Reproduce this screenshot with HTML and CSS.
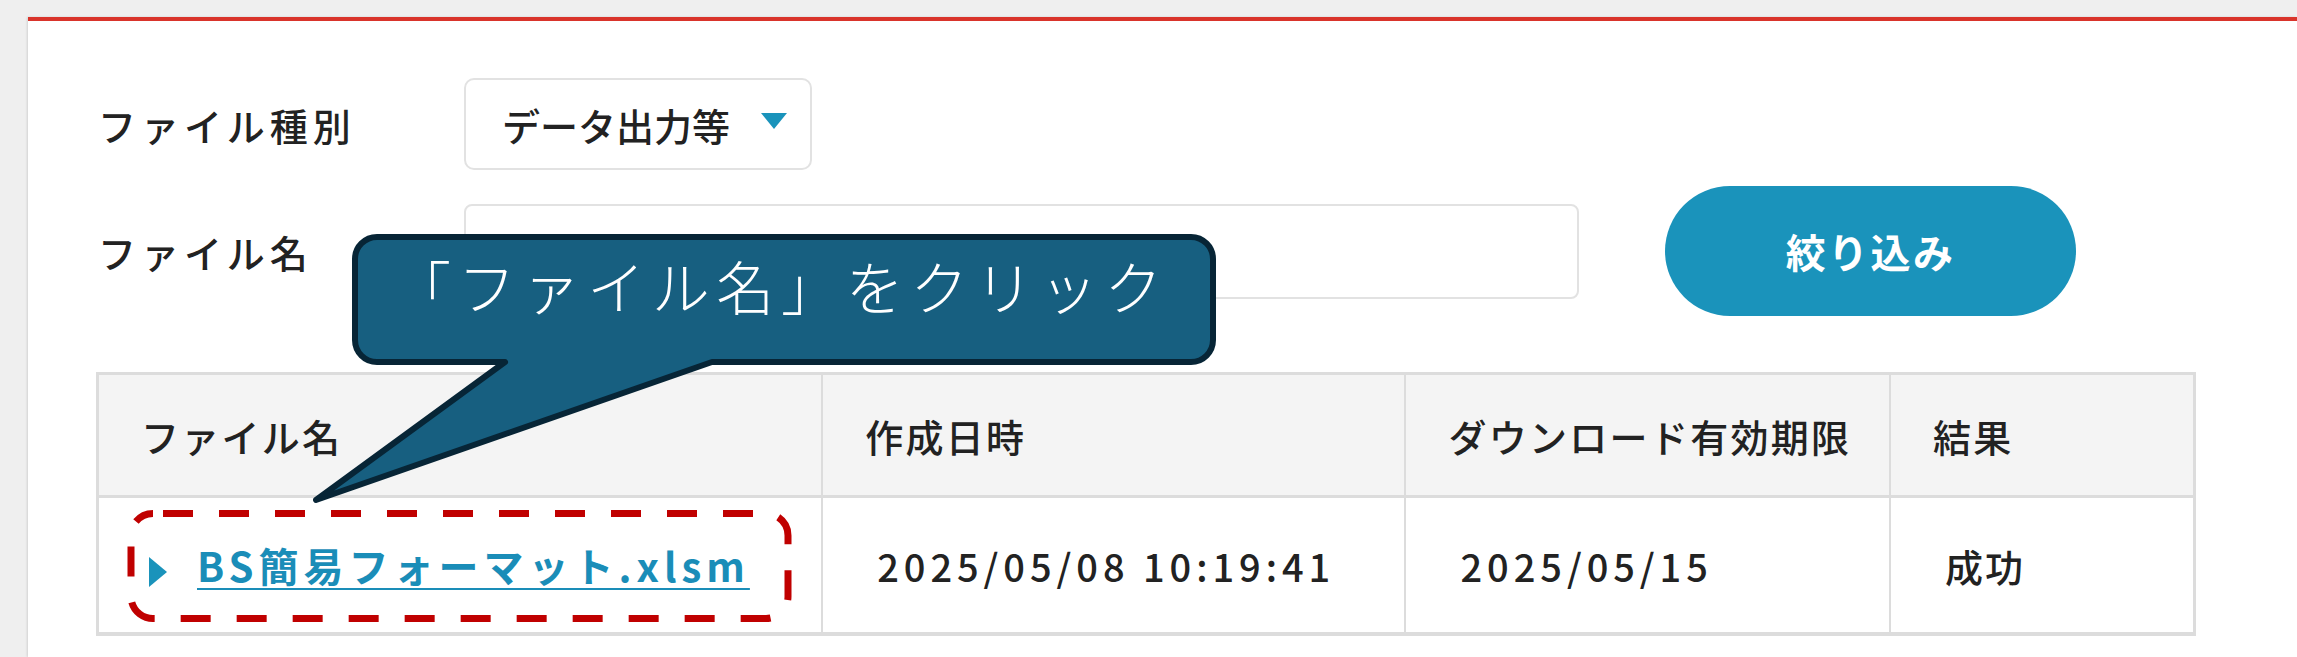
FILE: index.html
```html
<!DOCTYPE html>
<html lang="ja">
<head>
	<meta charset="UTF-8">
	<title>ファイル一覧</title>
	<link rel="stylesheet" href="styles.css">
</head>
<body>
	<div class="panel">
		<!-- Filter form -->
		<div class="filter">
			<div class="filter-row">
				<span class="filter-label">ファイル種別</span>
				<div class="select">
					<span>データ出力等</span>
					<span class="caret"></span>
				</div>
			</div>
			<div class="filter-row">
				<span class="filter-label">ファイル名</span>
				<div class="text-input"></div>
				<button class="btn-filter">絞り込み</button>
			</div>
		</div>

		<!-- Result table -->
		<table class="files">
			<colgroup>
				<col class="col-name">
				<col class="col-date">
				<col class="col-limit">
				<col class="col-result">
			</colgroup>
			<thead>
				<tr>
					<th>ファイル名</th>
					<th>作成日時</th>
					<th>ダウンロード有効期限</th>
					<th>結果</th>
				</tr>
			</thead>
			<tbody>
				<tr>
					<td><span class="file-arrow"></span><a class="file-link" href="#">BS簡易フォーマット.xlsm</a></td>
					<td class="num">2025/05/08 10:19:41</td>
					<td class="num">2025/05/15</td>
					<td>成功</td>
				</tr>
			</tbody>
		</table>

		<!-- Annotation overlays -->
		<svg class="mark-box" viewBox="120 500 680 130" width="680" height="130">
			<rect x="131" y="513.5" width="657" height="105" rx="22" ry="22" fill="none" stroke="#c00000" stroke-width="7" stroke-dasharray="30 26" stroke-dashoffset="-10"/>
		</svg>
		<div class="callout">
			<svg class="callout-shape" viewBox="300 225 925 290" width="925" height="290">
				<path d="M377 237 H1191 A22 22 0 0 1 1213 259 V340 A22 22 0 0 1 1191 362 H712 L316 500 L505 362 H377 A22 22 0 0 1 355 340 V259 A22 22 0 0 1 377 237 Z" fill="#175f80" stroke="#072536" stroke-width="6" stroke-linejoin="round"/>
			</svg>
			<span class="callout-text">「ファイル名」をクリック</span>
		</div>
	</div>
</body>
</html>
```

FILE: styles.css
```css
body {
	margin: 0;
	padding: 0;
	overflow: hidden;
	background-color: #efefef;
	font-family: "Noto Sans CJK JP", "Noto Sans", sans-serif;
	color: #222;
}

/* White panel with red top rule */
.panel {
	position: relative;
	box-sizing: border-box;
	min-height: calc(100vh - 17px);
	margin: 17px 0 0 28px;
	padding: 57px 0 0 68px;
	background: #fff;
	border-top: 4px solid #d9342b;
	box-shadow: -1px 0 2px rgba(0, 0, 0, 0.12);
}

/* Filter form */
.filter-row {
	display: flex;
	align-items: center;
}

.filter-row + .filter-row {
	margin-top: 16px;
}

.filter-label {
	box-sizing: border-box;
	width: 368px;
	padding-left: 2px;
	font-size: 38px;
	font-weight: 500;
	letter-spacing: 0.13em;
}

.select {
	box-sizing: border-box;
	display: flex;
	align-items: center;
	justify-content: space-between;
	width: 348px;
	height: 92px;
	padding: 0 23px 0 36px;
	border: 2px solid #e2e2e2;
	border-radius: 10px;
	font-size: 38px;
	font-weight: 500;
}

.caret {
	width: 0;
	height: 0;
	margin-bottom: 6px;
	border-left: 13px solid transparent;
	border-right: 13px solid transparent;
	border-top: 16px solid #1a93bb;
}

.text-input {
	box-sizing: border-box;
	width: 1115px;
	height: 95px;
	border: 2px solid #e2e2e2;
	border-radius: 8px;
}

.btn-filter {
	width: 411px;
	height: 130px;
	margin-left: 86px;
	border: none;
	border-radius: 65px;
	background-color: #1a93bb;
	color: #fff;
	font-family: inherit;
	font-size: 40px;
	font-weight: bold;
	letter-spacing: 0.06em;
}

/* Result table */
.files {
	width: 2100px;
	margin-top: 56px;
	border-collapse: collapse;
	border: 3px solid #dcdcdc;
	font-size: 38px;
	font-weight: 500;
}

.col-name { width: 726px; }
.col-date { width: 584px; }
.col-limit { width: 485px; }
.col-result { width: 305px; }

.files th {
	height: 120px;
	padding: 0 0 0 42px;
	background-color: #f4f4f4;
	border: 2px solid #dcdcdc;
	border-bottom-width: 3px;
	text-align: left;
	font-weight: 500;
	letter-spacing: 0.06em;
}

.files td {
	height: 134px;
	padding: 0 0 0 54px;
	border: 2px solid #dcdcdc;
	border-bottom-width: 4px;
	letter-spacing: 0.05em;
}

.files td:first-child {
	padding-left: 50px;
}

.files td.num {
	letter-spacing: 0.13em;
}

.file-arrow {
	display: inline-block;
	width: 0;
	height: 0;
	margin-right: 30px;
	vertical-align: middle;
	border-top: 15px solid transparent;
	border-bottom: 15px solid transparent;
	border-left: 18px solid #1a93bb;
}

.file-link {
	color: #1a8db8;
	font-size: 40px;
	font-weight: bold;
	letter-spacing: 0.125em;
	text-decoration: underline;
	text-decoration-thickness: 2px;
	text-underline-offset: 6px;
}

/* Annotations */
.mark-box {
	position: absolute;
	left: 92px;
	top: 479px;
}

.callout {
	position: absolute;
	left: 272px;
	top: 204px;
	width: 925px;
	height: 290px;
}

.callout-shape {
	display: block;
}

.callout-text {
	position: absolute;
	left: 93px;
	top: 31px;
	color: #fff;
	font-size: 58px;
	font-weight: 300;
	line-height: 1;
	letter-spacing: 0.115em;
	white-space: nowrap;
}
```
